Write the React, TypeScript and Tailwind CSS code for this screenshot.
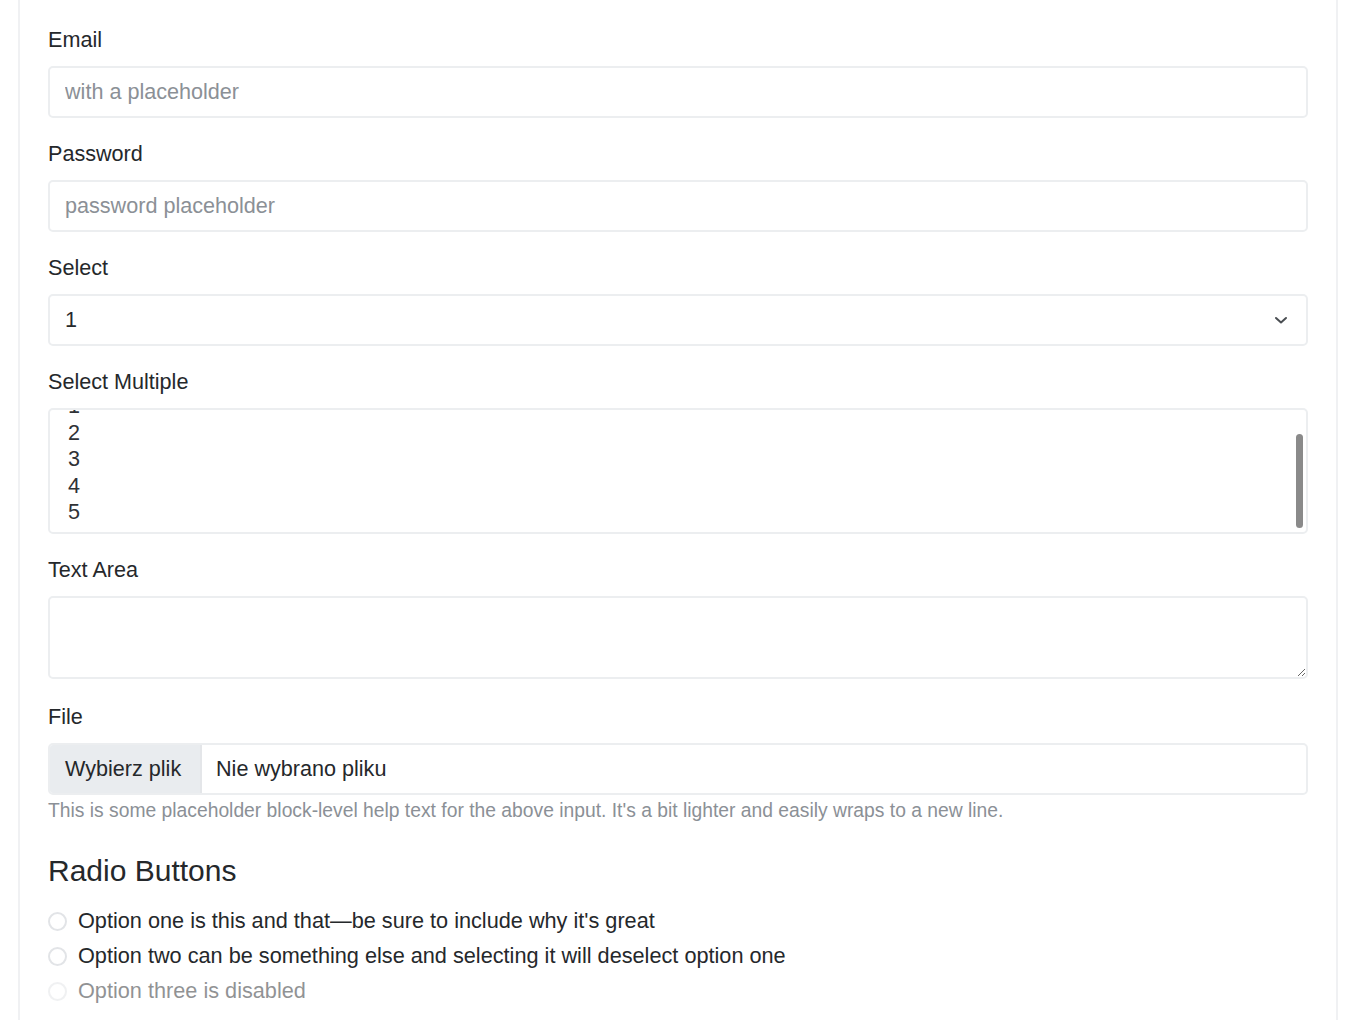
import React from "react";

const font = { fontFamily: '"Liberation Sans", Arial, sans-serif' };

function Label({ children }: { children: React.ReactNode }) {
  return <div className="mb-[10px] text-[21.6px] leading-[32px] text-[#25282b]">{children}</div>;
}

const boxClass =
  "w-full rounded-[5px] border-2 border-[#eceef0] bg-white px-[15px] text-[21.6px] text-[#25282b] outline-none";

function Radio({ label, disabled = false }: { label: string; disabled?: boolean }) {
  return (
    <div className={`flex h-[35px] items-center gap-[11px] ${disabled ? "opacity-50" : ""}`}>
      <span className="h-[19px] w-[19px] shrink-0 rounded-full border-2 border-[#e2e4e7] bg-white" />
      <span className="text-[21.7px] text-[#25282b]">{label}</span>
    </div>
  );
}

export default function App() {
  const multi = ["1", "2", "3", "4", "5"];
  return (
    <div className="min-h-[1020px] bg-white pl-[18px] pr-[22px]" style={font}>
      <div className="h-[1020px] border-x-2 border-[#f0f1f3] px-[28px] pt-[24px]">
        <div className="mb-[20px]">
          <Label>Email</Label>
          <input
            type="email"
            placeholder="with a placeholder"
            className={`${boxClass} h-[52px] placeholder:text-[#8b9096]`}
          />
        </div>

        <div className="mb-[20px]">
          <Label>Password</Label>
          <input
            type="password"
            placeholder="password placeholder"
            className={`${boxClass} h-[52px] placeholder:text-[#8b9096]`}
          />
        </div>

        <div className="mb-[20px]">
          <Label>Select</Label>
          <div className="relative">
            <select className={`${boxClass} h-[52px] appearance-none`} defaultValue="1">
              <option>1</option>
              <option>2</option>
              <option>3</option>
            </select>
            <svg
              className="pointer-events-none absolute right-[20px] top-[21px]"
              width="14"
              height="10"
              viewBox="0 0 14 10"
              fill="none"
            >
              <path d="M2 3l5 4.5 5-4.5" stroke="#4a4e52" strokeWidth="2" strokeLinecap="round" strokeLinejoin="round" />
            </svg>
          </div>
        </div>

        <div className="mb-[20px]">
          <Label>Select Multiple</Label>
          <div className={`${boxClass} relative h-[126px] overflow-hidden`}>
            <div className="-mt-[17px] pl-[3px]">
              {multi.map((m) => (
                <div key={m} className="h-[26.5px] text-[21.6px] leading-[26.5px] text-[#2f3236]">
                  {m}
                </div>
              ))}
            </div>
            <span className="absolute right-[3px] top-[24px] h-[94px] w-[7px] rounded-full bg-[#8a8a8a]" />
          </div>
        </div>

        <div className="mb-[22px]">
          <Label>Text Area</Label>
          <textarea className={`${boxClass} block h-[83px] py-[6px]`} />
        </div>

        <div className="mb-[31px]">
          <Label>File</Label>
          <div className="flex h-[52px] w-full overflow-hidden rounded-[5px] border-2 border-[#eceef0] bg-white text-[21.6px] text-[#25282b]">
            <div className="flex w-[152px] items-center border-r-2 border-[#e4e6e9] bg-[#e9ecef] pl-[15px]">
              Wybierz plik
            </div>
            <div className="flex items-center pl-[14px]">Nie wybrano pliku</div>
          </div>
          <div className="mt-[5px] text-[19.3px] leading-[22px] text-[#8b9096]">
            This is some placeholder block-level help text for the above input. It's a bit lighter and easily wraps to a new line.
          </div>
        </div>

        <div className="mb-[15px] text-[30px] leading-[36px] text-[#25282b]">Radio Buttons</div>
        <Radio label="Option one is this and that—be sure to include why it's great" />
        <Radio label="Option two can be something else and selecting it will deselect option one" />
        <Radio label="Option three is disabled" disabled />
      </div>
    </div>
  );
}
